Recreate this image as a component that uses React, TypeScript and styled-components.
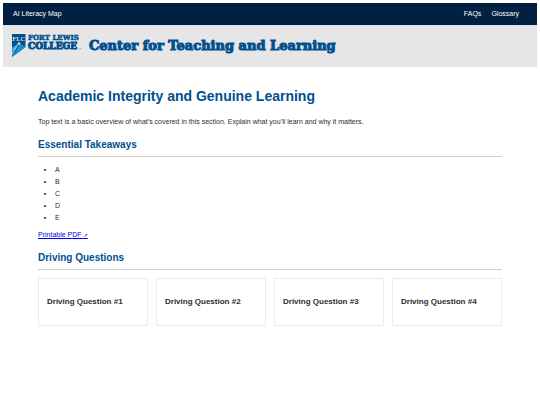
import React from "react";
import styled, { createGlobalStyle } from "styled-components";

const GlobalStyle = createGlobalStyle`
  *, *::before, *::after { box-sizing: border-box; }
  body {
    margin: 3px;
    background: #fff;
    color: #2d2d2d;
    font: 7px/12px "Liberation Sans", Arial, sans-serif;
  }
  h1, h2, h3, p, ul { margin: 0; }
`;

const NavBar = styled.nav`
  display: flex;
  align-items: center;
  justify-content: space-between;
  height: 22px;
  padding: 0 18px 0 10px;
  background: #002142;
`;

const NavGroup = styled.div`
  display: flex;
  gap: 10px;
`;

const NavLink = styled.a`
  color: #fff;
  text-decoration: none;
`;

const Banner = styled.header`
  display: flex;
  align-items: center;
  gap: 8px;
  height: 42px;
  padding: 0 8px 2px;
  border-top: 1px solid #d5e4f1;
  background: #e6e6e6;
`;

const LogoLink = styled.a`
  display: flex;
  flex: none;
`;

const SiteTitle = styled.div`
  color: #00508f;
  font: bold 13px/20px "DejaVu Serif", serif;
  -webkit-text-stroke: 1px #00508f;
  white-space: nowrap;
`;

const Main = styled.main`
  padding: 18px 35px;
`;

const PageTitle = styled.h1`
  color: #00508f;
  font-size: 14px;
  line-height: 22px;
`;

const Intro = styled.p`
  margin-top: 9px;
`;

const SectionTitle = styled.h2`
  margin-top: 9px;
  padding-bottom: 3px;
  border-bottom: 1px solid #d0d0d0;
  color: #00508f;
  font-size: 10px;
  line-height: 16px;
`;

const Takeaways = styled.ul`
  margin: 7px 0 5px;
  padding-left: 17px;
  line-height: 12px;
`;

const PdfLink = styled.a`
  display: block;
  width: fit-content;
  color: #0000ee;
  text-decoration: underline;
`;

const Arrow = styled.span`
  font-family: "DejaVu Sans", sans-serif;
  font-size: 5px;
  line-height: 5px;
`;

const Cards = styled.div`
  display: grid;
  grid-template-columns: repeat(4, 1fr);
  gap: 8px;
  margin-top: 8px;
`;

const Card = styled.section`
  padding: 17px 8px;
  border: 1px solid #ebebeb;
`;

const CardTitle = styled.h3`
  font-size: 8px;
  line-height: 12px;
`;

function CollegeLogo() {
  return (
    <svg width="70" height="26" viewBox="0 0 70 26" role="img" aria-label="Fort Lewis College">
      <path d="M1 1h13.500v13L1 24z" fill="#00508f" />
      <path d="M1 14l4-2 3-3 3 3 3.500 1.500V14L1 24z" fill="#168fd0" />
      <path d="M1 17.500l7-7L1 21" fill="none" stroke="#e6e6e6" strokeWidth="0.700" />
      <path d="M8 10.500L3.500 20" stroke="#00508f" strokeWidth="0.900" />
      <circle cx="8" cy="10.500" r="1.200" fill="#f2dfa1" />
      <text x="7.700" y="7.500" textAnchor="middle" fill="#fff" fontFamily="Liberation Serif, serif" fontSize="7">FLC</text>
      <g fill="#00508f" stroke="#00508f" fontFamily="DejaVu Serif, serif" fontWeight="bold">
        <text x="17" y="6.500" fontSize="7" strokeWidth="0.5">FORT LEWIS</text>
        <text x="17" y="16" fontSize="9" strokeWidth="1">COLLEGE</text>
      </g>
      <circle cx="69" cy="15.500" r="0.500" fill="#00508f" />
    </svg>
  );
}

const takeaways = ["A", "B", "C", "D", "E"];
const questions = [1, 2, 3, 4];

export default function App() {
  return (
    <>
      <GlobalStyle />
      <NavBar>
        <NavLink href="#map">AI Literacy Map</NavLink>
        <NavGroup>
          <NavLink href="#faqs">FAQs</NavLink>
          <NavLink href="#glossary">Glossary</NavLink>
        </NavGroup>
      </NavBar>
      <Banner>
        <LogoLink href="#home"><CollegeLogo /></LogoLink>
        <SiteTitle>Center for Teaching and Learning</SiteTitle>
      </Banner>
      <Main>
        <PageTitle>Academic Integrity and Genuine Learning</PageTitle>
        <Intro>
          Top text is a basic overview of what’s covered in this section. Explain what you’ll learn and why it matters.
        </Intro>
        <SectionTitle>Essential Takeaways</SectionTitle>
        <Takeaways>
          {takeaways.map((item) => <li key={item}>{item}</li>)}
        </Takeaways>
        <PdfLink href="#pdf">Printable PDF <Arrow>↗</Arrow></PdfLink>
        <SectionTitle>Driving Questions</SectionTitle>
        <Cards>
          {questions.map((n) => (
            <Card key={n}><CardTitle>Driving Question #{n}</CardTitle></Card>
          ))}
        </Cards>
      </Main>
    </>
  );
}
